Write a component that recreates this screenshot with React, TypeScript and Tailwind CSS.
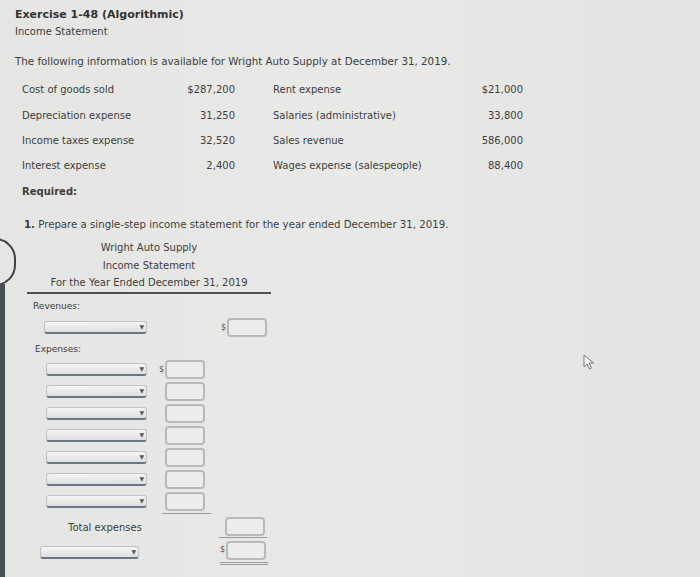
const font = { fontFamily: '"DejaVu Sans", Verdana, sans-serif' };

function Select({ className }: { className: string }) {
  return (
    <div
      className={
        'relative h-[13px] rounded-[3px] border border-[#bfc1c4] border-b-2 border-b-[#6f7683] bg-gradient-to-b from-[#f5f5f5] to-[#dedfe1] ' +
        className
      }
    >
      <span className="absolute right-[2px] top-[2px] text-[6px] leading-none text-[#555]">▼</span>
    </div>
  );
}

function Box() {
  return <div className="h-[19px] w-[40px] rounded-[4px] border-2 border-[#b9b9b9] bg-[#ececec]" />;
}

function Dollar() {
  return <span className="w-[6px] text-[8px] leading-none text-[#555]">$</span>;
}

const facts: [string, string, string, string][] = [
  ['Cost of goods sold', '$287,200', 'Rent expense', '$21,000'],
  ['Depreciation expense', '31,250', 'Salaries (administrative)', '33,800'],
  ['Income taxes expense', '32,520', 'Sales revenue', '586,000'],
  ['Interest expense', '2,400', 'Wages expense (salespeople)', '88,400'],
];

export default function App() {
  return (
    <div
      style={font}
      className="relative h-[577px] w-[700px] overflow-hidden bg-gradient-to-r from-[#e5e6e3] via-[#e9eae7] to-[#e3e4e1] text-[10px] text-[#3d3d3d]"
    >
      {/* left side tab */}
      <div className="absolute left-[-26px] top-[238px] h-[48px] w-[42px] rounded-full border-2 border-[#3c4046]" />
      <div className="absolute bottom-0 left-0 top-[284px] w-[5px] bg-[#4a4e55]" />

      {/* cursor */}
      <svg className="absolute left-[583px] top-[354px]" width="12" height="16" viewBox="0 0 12 16">
        <path d="M1 1 L1 13 L4 10 L6.5 15 L8.5 14 L6 9 L10.5 9 Z" fill="#f4f4f4" stroke="#777" strokeWidth="1" />
      </svg>

      <div className="pl-[15px] pt-[7px]">
        <div className="h-[16px] text-[11px] font-bold leading-[16px] text-[#333]">Exercise 1-48 (Algorithmic)</div>
        <div className="h-[17px] leading-[17px]">Income Statement</div>
        <div className="mt-[13px] h-[17px] text-[10.3px] leading-[17px]">
          The following information is available for Wright Auto Supply at December 31, 2019.
        </div>
      </div>

      <div className="mt-[7px] pl-[22px]">
        {facts.map((r) => (
          <div key={r[0]} className="flex h-[25.4px] items-center">
            <span className="w-[160px]">{r[0]}</span>
            <span className="w-[53px] text-right">{r[1]}</span>
            <span className="ml-[38px] w-[200px]">{r[2]}</span>
            <span className="w-[50px] text-right">{r[3]}</span>
          </div>
        ))}
        <div className="mt-[4px] h-[18px] font-bold leading-[18px]">Required:</div>
      </div>

      <div className="mt-[15px] pl-[24px]">
        <div className="h-[17px] text-[10.2px] leading-[17px]">
          <span className="font-bold">1.</span> Prepare a single-step income statement for the year ended December 31, 2019.
        </div>
      </div>

      <div className="ml-[27px] mt-[6px] w-[244px]">
        <div className="h-[18px] text-center leading-[18px]">Wright Auto Supply</div>
        <div className="h-[17px] text-center leading-[17px]">Income Statement</div>
        <div className="h-[17px] text-center leading-[17px]">For the Year Ended December 31, 2019</div>
        <div className="mt-[1px] h-[2px] bg-[#4d5058]" />
      </div>

      <div className="mt-[5px] pl-[33px] text-[9px] leading-[14px]">Revenues:</div>

      <div className="mt-[5px] flex h-[20px] items-center">
        <Select className="ml-[44px] w-[103px]" />
        <div className="ml-[74px] flex items-center">
          <Dollar />
          <Box />
        </div>
      </div>

      <div className="mt-[4px] pl-[35px] text-[9px] leading-[14px]">Expenses:</div>

      <div className="mt-[3px]">
        {[0, 1, 2, 3, 4, 5, 6].map((i) => (
          <div key={i} className="flex h-[22px] items-center">
            <Select className="ml-[46px] w-[101px]" />
            <div className="ml-[12px] flex items-center">
              {i === 0 ? <Dollar /> : <span className="w-[6px]" />}
              <Box />
            </div>
          </div>
        ))}
        <div className="ml-[162px] h-[1px] w-[49px] bg-[#9a9a9a]" />
      </div>

      <div className="mt-[3px] flex h-[22px] items-center">
        <span className="ml-[68px] w-[151px]">Total expenses</span>
        <div className="flex flex-col">
          <div className="ml-[6px]">
            <Box />
          </div>
          <div className="mt-[1px] h-[1px] w-[48px] bg-[#9a9a9a]" />
        </div>
      </div>

      <div className="mt-[3px] flex h-[22px] items-center">
        <Select className="ml-[40px] w-[99px]" />
        <div className="ml-[81px] flex flex-col">
          <div className="flex items-center">
            <Dollar />
            <Box />
          </div>
          <div className="mt-[2px] h-[1px] w-[48px] bg-[#9a9a9a]" />
          <div className="mt-[1px] h-[1px] w-[48px] bg-[#9a9a9a]" />
        </div>
      </div>
    </div>
  );
}
